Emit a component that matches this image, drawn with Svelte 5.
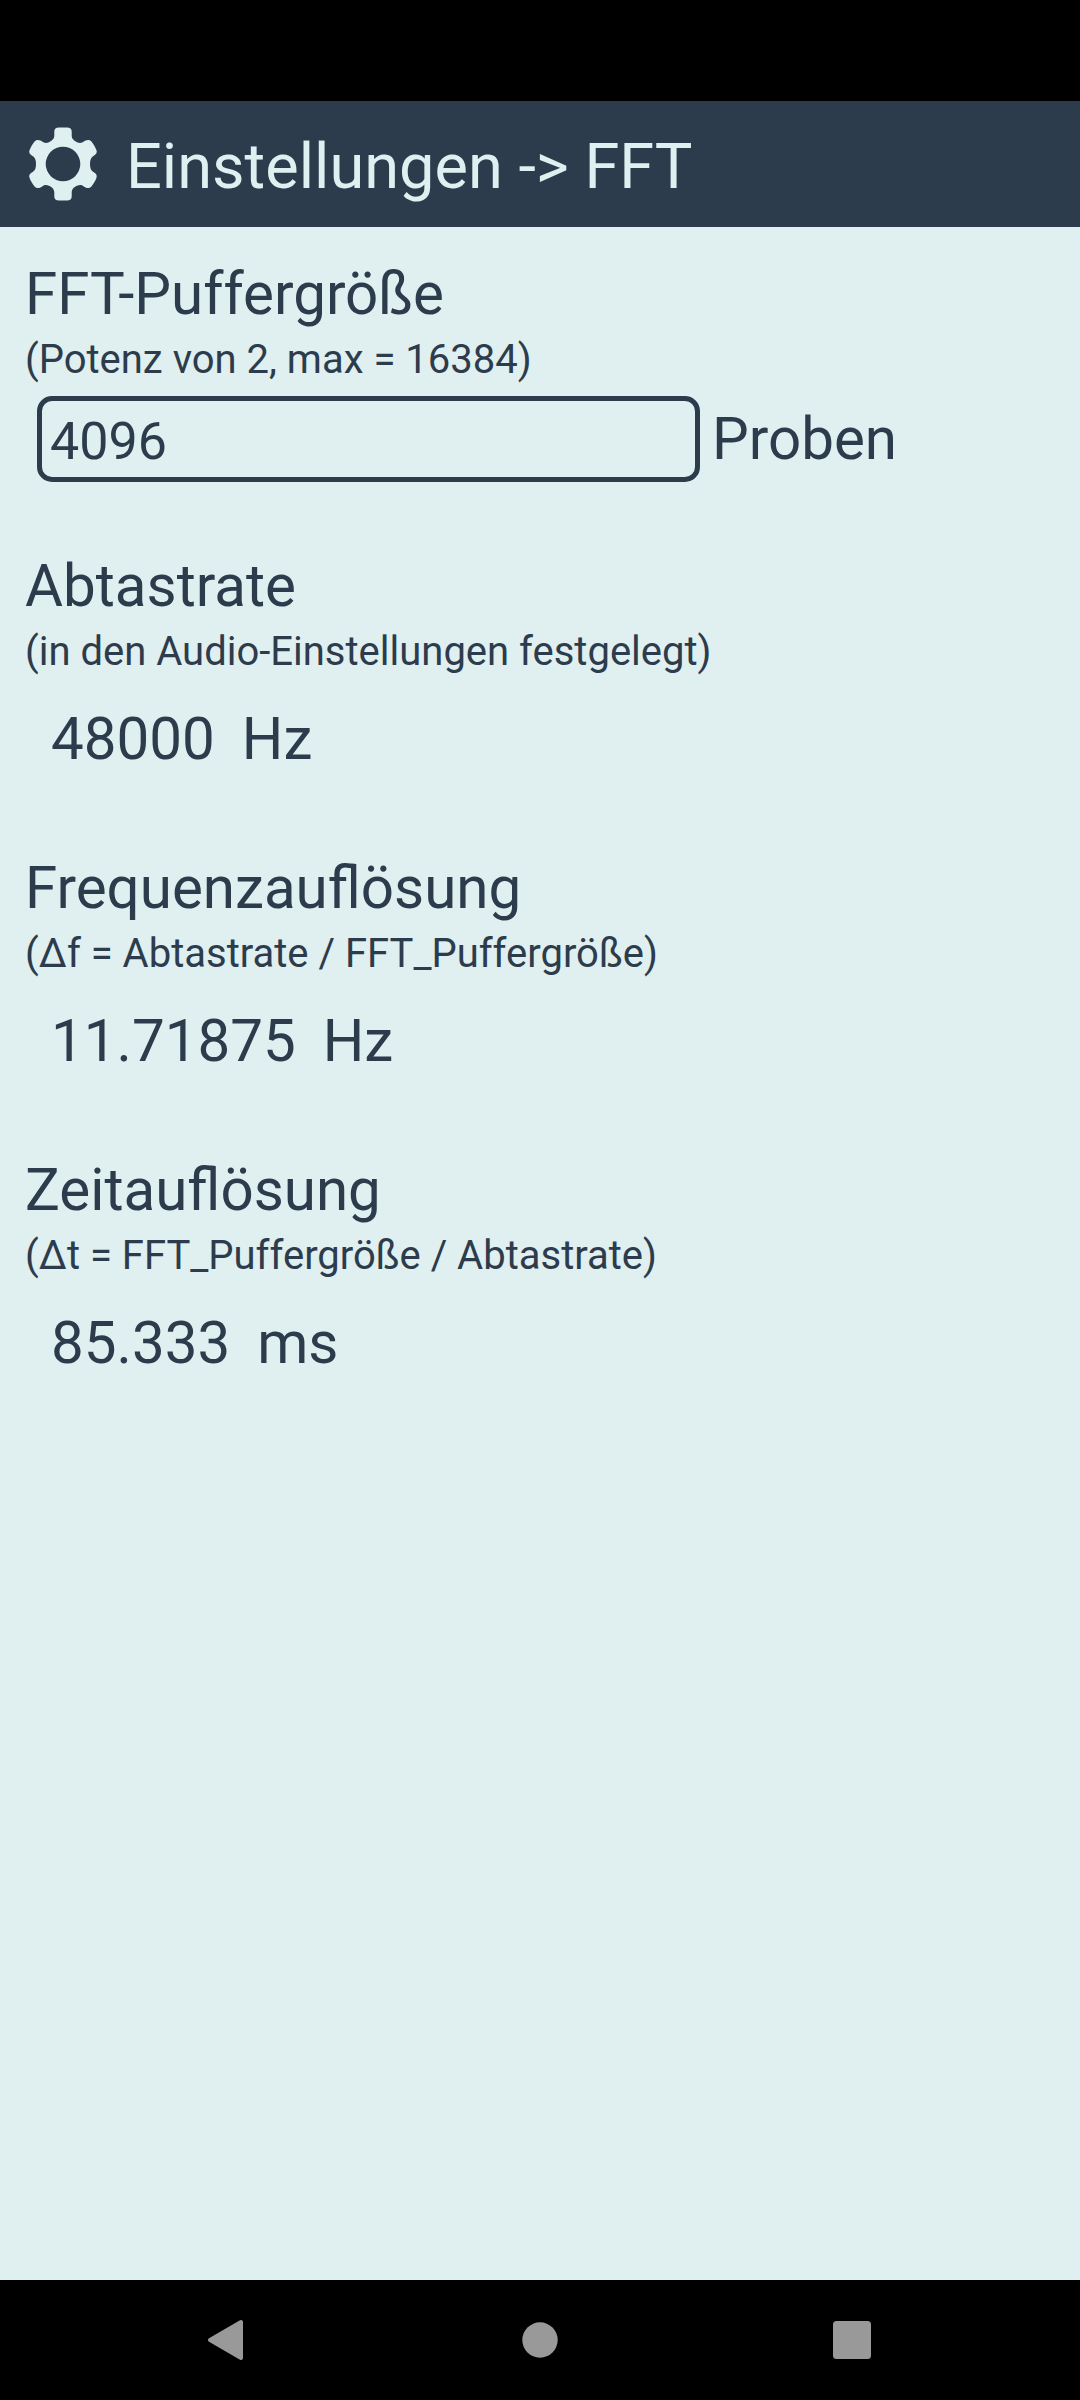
<script>
  const bufferSize = '4096';
  const readings = [
    { title: 'Abtastrate', note: '(in den Audio-Einstellungen festgelegt)', value: '48000', unit: 'Hz' },
    { title: 'Frequenzauflösung', note: '(Δf = Abtastrate / FFT_Puffergröße)', value: '11.71875', unit: 'Hz' },
    { title: 'Zeitauflösung', note: '(Δt = FFT_Puffergröße / Abtastrate)', value: '85.333', unit: 'ms' }
  ];
</script>

<div class="screen">
  <div class="status"></div>
  <header>
    <svg class="gear" width="74" height="74" viewBox="-37 -37 74 74">
      <path
        fill-rule="evenodd"
        d="M-8.7 -32.5Q-8.7 -36.4 -4 -36.4H4Q8.7 -36.4 8.7 -32.5V-28.5C8.7 -25 11 -23.3 14 -21.8C17 -20.5 19 -21.2 20.5 -22.2C23 -24.2 26.5 -25.2 28.8 -22C30.8 -19.5 32.4 -16.5 33.5 -13.7C34.6 -10.5 32 -9 30 -7.8C28 -6.5 27 -4 27 0C27 4 28 6.5 30 7.8C32 9 34.6 10.5 33.5 13.7C32.4 16.5 30.8 19.5 28.8 22C26.5 25.2 23 24.2 20.5 22.2C19 21.2 17 20.5 14 21.8C11 23.3 8.7 25 8.7 28.5V32.5Q8.7 36.4 4 36.4H-4Q-8.7 36.4 -8.7 32.5V28.5C-8.7 25 -11 23.3 -14 21.8C-17 20.5 -19 21.2 -20.5 22.2C-23 24.2 -26.5 25.2 -28.8 22C-30.8 19.5 -32.4 16.5 -33.5 13.7C-34.6 10.5 -32 9 -30 7.8C-28 6.5 -27 4 -27 0C-27 -4 -28 -6.5 -30 -7.8C-32 -9 -34.6 -10.5 -33.5 -13.7C-32.4 -16.5 -30.8 -19.5 -28.8 -22C-26.5 -25.2 -23 -24.2 -20.5 -22.2C-19 -21.2 -17 -20.5 -14 -21.8C-11 -23.3 -8.7 -25 -8.7 -28.5ZM17.3 0A17.3 17.3 0 1 0 -17.3 0A17.3 17.3 0 1 0 17.3 0Z"
      />
    </svg>
    <h1>Einstellungen -&gt; FFT</h1>
  </header>

  <main>
    <section class="buffer">
      <h2>FFT-Puffergröße</h2>
      <p class="note">(Potenz von 2, max = 16384)</p>
      <div class="field-row">
        <div class="field">{bufferSize}</div>
        <span class="unit">Proben</span>
      </div>
    </section>

    {#each readings as r}
      <section class="reading">
        <h2>{r.title}</h2>
        <p class="note">{r.note}</p>
        <div class="value"><span>{r.value}</span><span>{r.unit}</span></div>
      </section>
    {/each}
  </main>

  <nav>
    <svg width="312" height="120" viewBox="0 0 312 120">
      <path class="back" d="M138 60L169 42V78Z" />
    </svg>
    <svg width="312" height="120" viewBox="0 0 312 120"><circle cx="156" cy="60" r="17.7" /></svg>
    <svg width="312" height="120" viewBox="0 0 312 120"><rect x="137" y="41" width="38" height="38" rx="3.5" /></svg>
  </nav>
</div>

<style>
  :global(body) {
    margin: 0;
    background: #000;
  }
  .screen {
    display: flex;
    flex-direction: column;
    width: 1080px;
    height: 2400px;
    background: #e0efef;
    color: #2d3c4c;
    font-family: Roboto, sans-serif;
  }
  .status {
    height: 101px;
    background: #000;
  }
  header {
    box-sizing: border-box;
    display: flex;
    height: 126px;
    padding-left: 26px;
    background: #2d3c4c;
    color: #e0efef;
  }
  .gear {
    margin-top: 26px;
    fill: #e0efef;
  }
  h1,
  h2,
  p {
    margin: 0;
    font-weight: 400;
  }
  h1 {
    padding: 5px 0 0 26px;
    font-size: 63.1px;
    line-height: 120px;
  }
  main {
    flex: 1;
    padding: 33px 0 0 25px;
  }
  h2,
  .unit,
  .value {
    font-size: 58.3px;
    line-height: 68px;
    white-space: nowrap;
  }
  .note {
    margin-top: 8px;
    font-size: 40px;
    line-height: 47px;
  }
  .buffer {
    height: 292px;
  }
  .reading {
    height: 302px;
  }
  .field-row {
    display: flex;
    margin: 13px 0 0 12px;
  }
  .field {
    box-sizing: border-box;
    width: 663px;
    height: 86px;
    padding-left: 8px;
    border: 5px solid #2d3c4c;
    border-radius: 15px;
    font-size: 52px;
    line-height: 81px;
  }
  .unit {
    margin: 9px 0 0 12px;
  }
  .value {
    display: flex;
    gap: 27px;
    margin: 30px 0 0 26px;
  }
  nav {
    display: flex;
    justify-content: center;
    height: 120px;
    background: #000;
  }
  nav svg {
    fill: #999;
  }
  .back {
    stroke: #999;
    stroke-width: 4;
    stroke-linejoin: round;
  }
</style>
